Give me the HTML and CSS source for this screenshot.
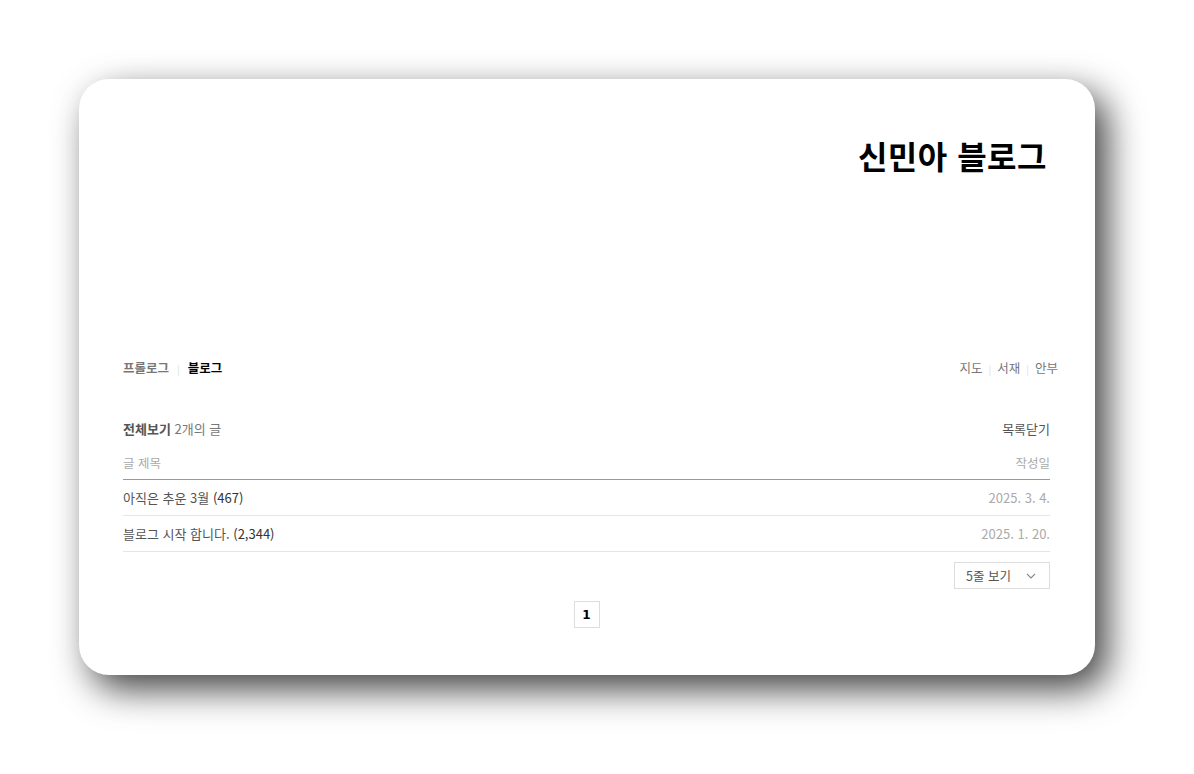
FILE: index.html
```html
<!DOCTYPE html>
<html lang="ko">
<head>
	<meta charset="utf-8">
	<title>신민아 블로그</title>
	<link rel="stylesheet" href="styles.css">
</head>
<body>

<div class="card">
	<header class="blog-head">
		<h1 class="blog-title">신민아 블로그</h1>
	</header>

	<nav class="menu">
		<div class="menu-left">
			<a href="#">프롤로그</a><span class="sep">|</span><a href="#" class="on">블로그</a>
		</div>
		<div class="menu-right">
			<a href="#">지도</a><span class="sep">|</span><a href="#">서재</a><span class="sep">|</span><a href="#">안부</a>
		</div>
	</nav>

	<section class="list">
		<div class="list-top">
			<div><strong>전체보기</strong> 2개의 글</div>
			<a href="#" class="close">목록닫기</a>
		</div>
		<table class="posts">
			<thead>
				<tr><th class="t-title">글 제목</th><th class="t-date">작성일</th></tr>
			</thead>
			<tbody>
				<tr><td class="t-title">아직은 추운 3월 <span class="cnt">(467)</span></td><td class="t-date">2025. 3. 4.</td></tr>
				<tr><td class="t-title">블로그 시작 합니다. <span class="cnt">(2,344)</span></td><td class="t-date">2025. 1. 20.</td></tr>
			</tbody>
		</table>
		<div class="list-foot">
			<div class="rows-select">5줄 보기
				<svg width="10" height="6" viewBox="0 0 10 6"><path d="M1 1l4 4 4-4" fill="none" stroke="#888" stroke-width="1.1"/></svg>
			</div>
		</div>
		<div class="paging"><span class="page on">1</span></div>
	</section>
</div>

</body>
</html>
```

FILE: styles.css
```css
html {
	font-family: "Noto Sans CJK KR", "Noto Sans", sans-serif;
}

body {
	margin: 0;
	padding: 79px;
	background: #fff;
	color: #333;
}

a {
	text-decoration: none;
	color: inherit;
}

.card {
	width: 1016px;
	height: 596px;
	box-sizing: border-box;
	padding: 0 45px 0 44px;
	background: #fff;
	border-radius: 30px;
	box-shadow: 12px 14px 36px rgba(0, 0, 0, .75);
}

.blog-head {
	height: 268px;
	display: flex;
	justify-content: flex-end;
	padding-right: 3px;
}

.blog-title {
	margin: 53px 0 0;
	font-size: 32px;
	font-weight: 700;
	color: #000;
	letter-spacing: 0.5px;
}

.menu {
	display: flex;
	justify-content: space-between;
	align-items: center;
	font-size: 12.5px;
	margin-right: -8px;
	height: 40px;
}

.menu a {
	color: #777;
}

.menu-left a {
	font-weight: 700;
	color: #777;
}

.menu-left a.on {
	color: #000;
}

.sep {
	color: #ddd;
	font-size: 10px;
	margin: 0 8px;
}

.menu-right .sep {
	margin: 0 6px;
}

.list {
	padding-top: 24px;
}

.list-top {
	display: flex;
	justify-content: space-between;
	font-size: 13px;
	color: #777;
	height: 34px;
	align-items: center;
}

.list-top strong {
	color: #555;
}

.list-top .close {
	color: #555;
}

.posts {
	width: 100%;
	border-collapse: collapse;
	font-size: 12.5px;
}

.posts th {
	font-weight: 400;
	color: #aaa;
	height: 34px;
	padding: 0;
	border-bottom: 1px solid #999;
}

.posts td {
	height: 35px;
	padding: 0;
	border-bottom: 1px solid #e5e5e5;
	color: #555;
}

.t-title {
	text-align: left;
}

.t-date {
	text-align: right;
}

.posts td.t-date {
	color: #aaa;
	font-size: 13px;
}

.posts td.t-title {
	font-size: 13px;
}

.cnt {
	color: #333;
}

.list-foot {
	display: flex;
	justify-content: flex-end;
	padding-top: 10px;
}

.rows-select {
	width: 96px;
	height: 27px;
	box-sizing: border-box;
	border: 1px solid #ddd;
	display: flex;
	align-items: center;
	justify-content: space-between;
	padding: 0 13px 0 11px;
	font-size: 12.5px;
	color: #555;
}

.paging {
	display: flex;
	justify-content: center;
	padding-top: 12px;
}

.page {
	width: 26px;
	height: 27px;
	box-sizing: border-box;
	border: 1px solid #ddd;
	display: flex;
	align-items: center;
	justify-content: center;
	font-size: 12px;
	font-weight: 700;
	color: #000;
	font-family: "DejaVu Sans", sans-serif;
}
```
